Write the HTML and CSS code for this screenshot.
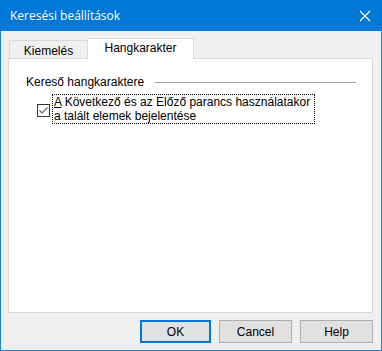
FILE: index.html
```html
<!DOCTYPE html>
<html lang="hu">
<head>
    <meta charset="UTF-8">
    <title>Keresési beállítások</title>
    <link rel="stylesheet" href="styles.css">
</head>
<body>
    <div class="window">
        <div class="titlebar">
            <span class="title">Keresési beállítások</span>
            <svg class="close" width="12" height="12" viewBox="0 0 12 12">
                <path d="M1 1 L11 11 M11 1 L1 11" stroke="#fff" stroke-width="1.2" fill="none"/>
            </svg>
        </div>

        <div class="body">
            <div class="tabs">
                <div class="tab">Kiemelés</div>
                <div class="tab active">Hangkarakter</div>
            </div>

            <div class="panel">
                <div class="group-head">
                    <span>Kereső hangkaraktere</span>
                    <div class="rule"></div>
                </div>

                <div class="option">
                    <div class="checkbox">
                        <svg width="11" height="11" viewBox="0 0 11 11">
                            <path d="M1.5 5.5 L4 8 L9.5 2.5" stroke="#666" stroke-width="1.2" fill="none"/>
                        </svg>
                    </div>
                    <div class="option-text"><u>A</u> Következő és az Előző parancs használatakor<br>a talált elemek bejelentése</div>
                </div>
            </div>

            <div class="buttons">
                <button class="default">OK</button>
                <button>Cancel</button>
                <button>Help</button>
            </div>
        </div>
    </div>
</body>
</html>
```

FILE: styles.css
```css
body {
    margin: 0;
    padding: 0;
    font-family: Tahoma, 'DejaVu Sans', sans-serif;
    font-size: 11px;
    background: #f0f0f0;
}

.window {
    width: 382px;
    height: 351px;
    box-sizing: border-box;
    display: flex;
    flex-direction: column;
    border: 1px solid #1883d7;
    border-top: none;
    background: #f0f0f0;
}

.titlebar {
    height: 31px;
    margin: 0 -1px;
    background: #0078d7;
    color: white;
    display: flex;
    align-items: center;
    justify-content: space-between;
    padding: 0 11px 0 10px;
    font-family: 'Open Sans', 'DejaVu Sans', sans-serif;
    font-size: 12px;
}

.close {
    display: block;
}

.body {
    flex: 1;
    display: flex;
    flex-direction: column;
    padding: 7px 8px 0 7px;
}

.tabs {
    display: flex;
    align-items: flex-end;
    height: 20px;
    padding-left: 1px;
    font-family: 'Liberation Sans', Arial, sans-serif;
    font-size: 12px;
}

.tab {
    height: 18px;
    box-sizing: border-box;
    width: 79px;
    border: 1px solid #d9d9d9;
    border-bottom: none;
    background: #f0f0f0;
    display: flex;
    align-items: center;
    justify-content: center;
    padding-top: 2px;
}

.tab.active {
    height: 21px;
    width: 106px;
    background: #fff;
    border-left: none;
    margin-bottom: -1px;
    position: relative;
    z-index: 1;
    padding-top: 0;
    padding-bottom: 2px;
}

.panel {
    height: 255px;
    box-sizing: border-box;
    border: 1px solid #d9d9d9;
    background: #fff;
    padding: 16px 0 0 17px;
    font-family: 'Liberation Sans', Arial, sans-serif;
    font-size: 12px;
    color: #000;
}

.group-head {
    display: flex;
    align-items: center;
    gap: 11px;
    padding-right: 16px;
}

.rule {
    flex: 1;
    height: 1px;
    background: #a0a0a0;
}

.option {
    display: flex;
    align-items: center;
    margin: 5px 0 0 11px;
}

.checkbox {
    width: 13px;
    height: 13px;
    box-sizing: border-box;
    border: 1px solid #333;
    background: #fff;
    display: flex;
    align-items: center;
    justify-content: center;
    margin-right: 2px;
    margin-top: 2px;
}

.option-text {
    border: 1px dotted #000;
    padding: 0 4px 0 1px;
    line-height: 14px;
}

.buttons {
    display: flex;
    justify-content: flex-end;
    gap: 8px;
    margin-top: 7px;
}

button {
    width: 73px;
    height: 23px;
    background: #e1e1e1;
    border: 1px solid #adadad;
    font-family: 'Liberation Sans', Arial, sans-serif;
    font-size: 12px;
    color: #000;
    padding: 0;
}

button.default {
    border: 2px solid #0078d7;
    width: 71px;
}
```
